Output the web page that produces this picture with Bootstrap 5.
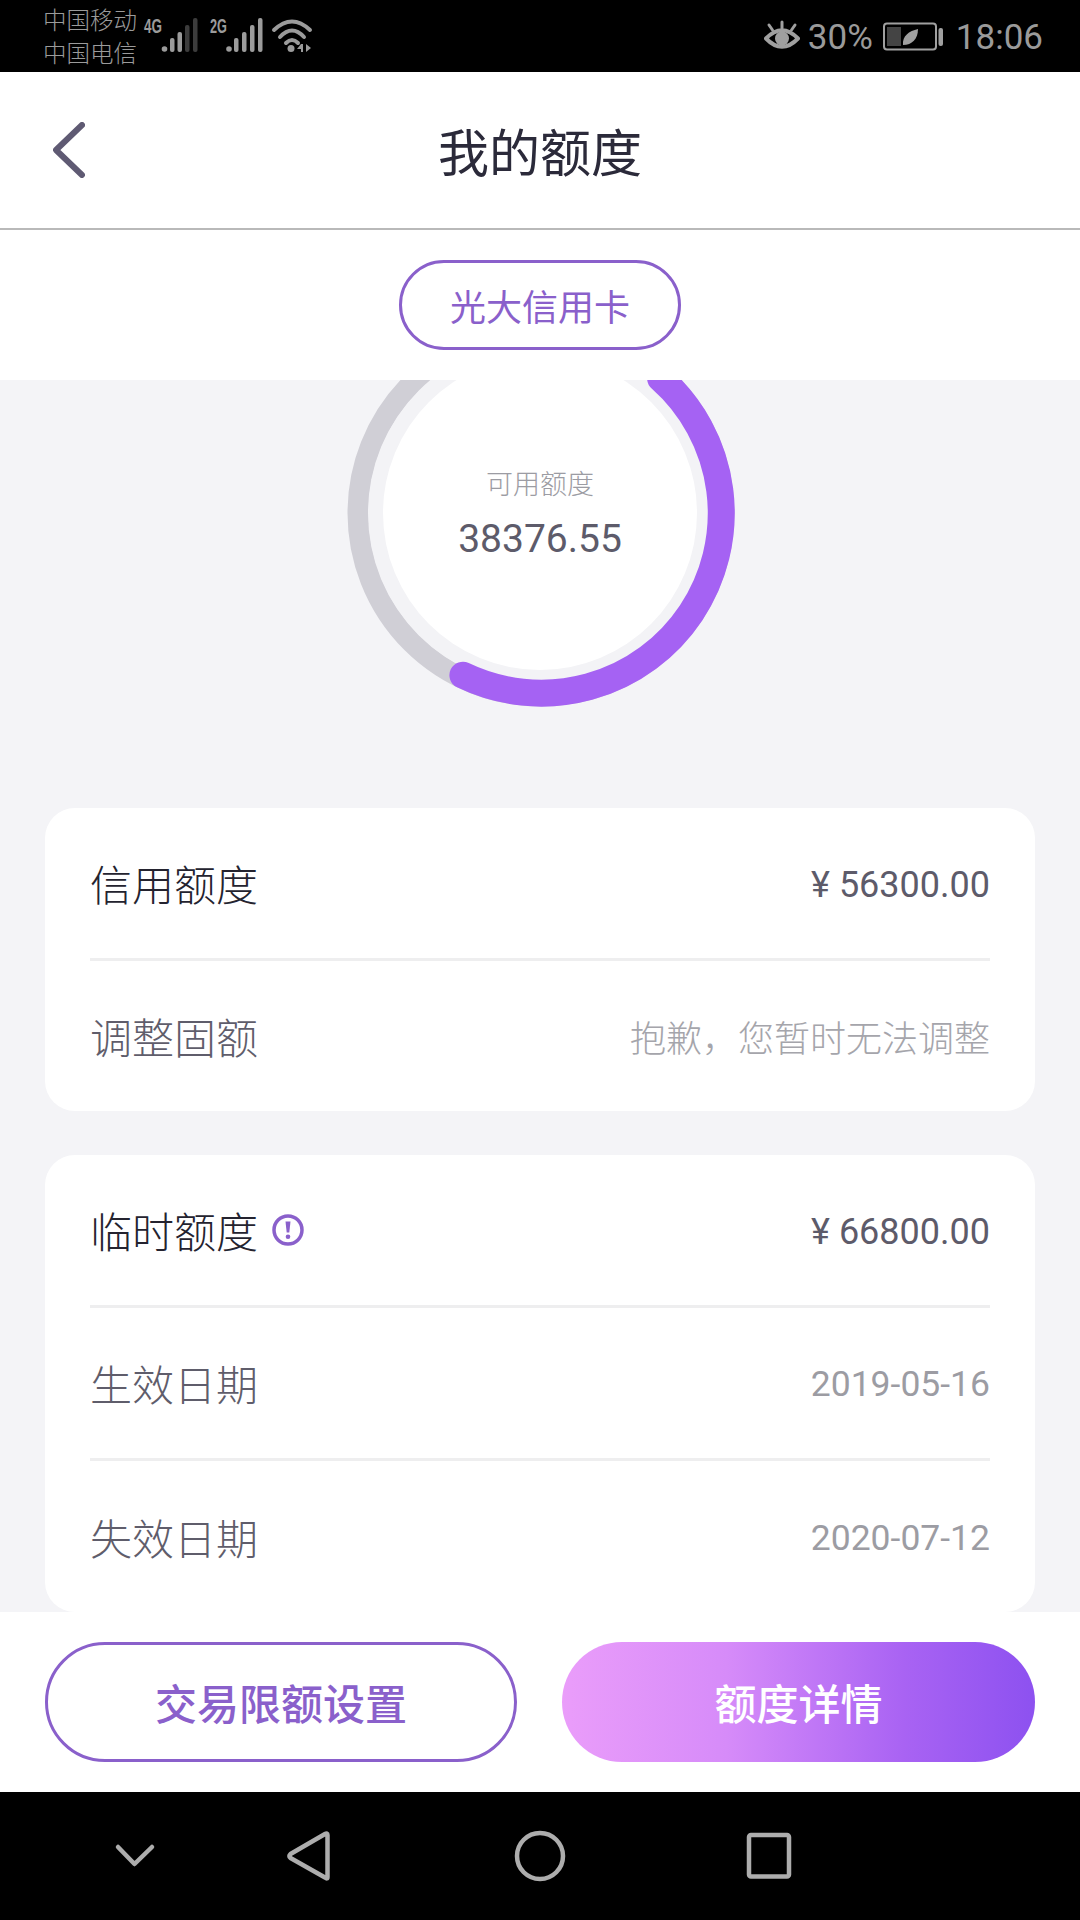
<!DOCTYPE html>
<html lang="zh">
<head>
<meta charset="utf-8">
<title>我的额度</title>
<link href="https://cdn.jsdelivr.net/npm/bootstrap@5.3.0/dist/css/bootstrap.min.css" rel="stylesheet">
<style>
html,body{margin:0;padding:0;background:#000}
.app-page{width:1080px;height:1920px;overflow:hidden;font-family:Roboto,"Noto Sans CJK SC",sans-serif;background:#fff}
.status-strip{height:72px;background:#000;color:#9b9b9b;flex:none}
.carrier{width:100px;margin-left:43px;font-size:23.500px;line-height:33px;font-family:"Noto Sans CJK SC",sans-serif;font-weight:300;padding-top:3px;white-space:nowrap}
.net-tag{font-family:"Liberation Sans",sans-serif;font-weight:700;font-size:20px;fill:#9b9b9b}
.sys-text{font-size:35px;font-weight:400;line-height:75px;color:#9a9a9a}
.sys-end{margin-right:37px;margin-left:12px}
.sys-pct{margin-left:8px}
.batt-icon{margin-left:10px}
.head-bar{height:158px;flex:none;border-bottom:2px solid #b9b9b9;background:#fff;padding-left:53px;position:relative}
.head-title{font-size:51px;color:#2b2a3a;font-family:"Noto Sans CJK SC",sans-serif;font-weight:400;line-height:1}
.title-slot{position:absolute;left:0;right:0;top:0;bottom:0}
.picker-band{height:150px;flex:none;background:#fff;padding-top:30px}
.pill-picker{width:282px;height:90px;border:3px solid #8a60cb;border-radius:45px;color:#8a60cb;font-size:36px;font-family:"Noto Sans CJK SC",sans-serif;padding:0;background:#fff}
.gray-area{height:1232px;flex:none;background:#f4f4f7;overflow:hidden}
.ring-stack{height:428px;display:grid}
.ring-stack>*{grid-area:1/1}
.ring-copy{height:268px}
.ring-label{font-size:27px;color:#9c9ca3;font-family:"Noto Sans CJK SC",sans-serif;font-weight:300;line-height:1;margin-top:89px}
.ring-value{font-size:39px;color:#5d5b6a;line-height:1;margin-top:24px}
.panel-box{margin:0 45px;border:0;border-radius:30px;background:#fff;padding:0 45px}
.panel-gap{margin-top:44px}
.line-row{height:153px;border-bottom:3px solid #eeeeef}
.line-row.final{border-bottom:0;height:151px}
.panel-short .line-row.final{height:150px}
.line-key{font-size:42px;font-family:"Noto Sans CJK SC",sans-serif;font-weight:300;color:#24232f;line-height:1}
.line-key.soft{color:#5f5d6b}
.line-num{font-size:36px;color:#5d5b6a;line-height:1;padding-top:3px}
.line-num.soft{font-size:35.500px;color:#9c9ca3;padding-top:4px}
.line-hint{font-size:36px;color:#a5a5ab;font-family:"Noto Sans CJK SC",sans-serif;font-weight:300;line-height:1}
.tip-icon{margin-left:14px}
.foot-band{height:180px;flex:none;background:#fff;padding:30px 45px 0}
.act-btn{height:120px;border-radius:60px;font-size:42px;font-family:"Noto Sans CJK SC",sans-serif;font-weight:500;padding:0;line-height:1}
.act-outline{width:472px;border:3px solid #8a60cb;color:#8a60cb;background:#fff}
.act-fill{width:473px;border:0;color:#fff;background:linear-gradient(90deg,#ea9dfa 0%,#d68bf9 35%,#a963f3 72%,#8d51f0 100%)}
.nav-strip{height:128px;flex:none;background:#000}
</style>
</head>
<body>
<div class="app-page d-flex flex-column">
  <div class="status-strip d-flex align-items-start">
    <div class="carrier"><div>中国移动</div><div>中国电信</div></div>
    <svg width="172" height="72" viewBox="143 0 172 72">
      <text x="144" y="33" class="net-tag" textLength="18" lengthAdjust="spacingAndGlyphs">4G</text>
      <g fill="#9b9b9b">
        <circle cx="164.500" cy="49" r="2.800"/>
        <rect x="170" y="38" width="4.500" height="14" rx="2"/>
        <rect x="177.500" y="32" width="4.500" height="20" rx="2"/>
        <rect x="185" y="25" width="4.500" height="27" rx="2" fill="#3c3c3c"/>
        <rect x="193" y="18" width="4.500" height="34" rx="2" fill="#3c3c3c"/>
      </g>
      <text x="210" y="33" class="net-tag" textLength="17" lengthAdjust="spacingAndGlyphs">2G</text>
      <g fill="#9b9b9b">
        <circle cx="229" cy="49" r="2.800"/>
        <rect x="234" y="38" width="4.500" height="14" rx="2"/>
        <rect x="242" y="32" width="4.500" height="20" rx="2"/>
        <rect x="250" y="25" width="4.500" height="27" rx="2"/>
        <rect x="258" y="18" width="4.500" height="34" rx="2"/>
      </g>
      <g fill="none" stroke="#9b9b9b" stroke-width="4" stroke-linecap="round">
        <path d="M274 30Q292 13 310 30"/>
        <path d="M280 37Q292 24 304 37"/>
        <path d="M286 43Q292 37 298 43"/>
      </g>
      <circle cx="291" cy="48.500" r="3.500" fill="#9b9b9b"/>
      <path d="M301 44h2v8h-2zM297 49l4-5v5zM306 44l5 4-5 4z" fill="#9b9b9b"/>
    </svg>
    <div class="ms-auto d-flex align-items-start">
      <svg width="36" height="72" viewBox="766 0 36 72">
        <path d="M768 38.500Q784 22 800 38.500Q784 55 768 38.500Z" fill="none" stroke="#a0a0a0" stroke-width="4" stroke-linejoin="round"/>
        <circle cx="784" cy="38.500" r="7" fill="#a0a0a0"/>
        <path d="M784 22v6M771 25l3.500 5M797 25l-3.500 5" stroke="#a0a0a0" stroke-width="3" stroke-linecap="round"/>
      </svg>
      <span class="sys-text sys-pct">30%</span>
      <svg width="61" height="72" viewBox="884 0 61 72" class="batt-icon">
        <rect x="885" y="23.500" width="52" height="26" rx="3" fill="none" stroke="#a0a0a0" stroke-width="2"/>
        <rect x="888" y="27" width="14" height="19" fill="#444"/>
        <path d="M904 45c-1-9 6-14 15-16c0 10-6 16-15 16z" fill="#a0a0a0"/>
        <rect x="939.500" y="28" width="4.500" height="18" rx="2" fill="#a0a0a0"/>
      </svg>
      <span class="sys-text sys-end">18:06</span>
    </div>
  </div>

  <div class="head-bar d-flex align-items-center">
    <svg width="32" height="56" viewBox="0 0 32 56">
      <path d="M29 3L3 28L29 53" fill="none" stroke="#5f5a73" stroke-width="6" stroke-linecap="round" stroke-linejoin="round"/>
    </svg>
    <div class="title-slot d-flex align-items-center justify-content-center"><span class="head-title">我的额度</span></div>
  </div>

  <div class="picker-band d-flex justify-content-center align-items-start">
    <button type="button" class="btn pill-picker">光大信用卡</button>
  </div>

  <div class="gray-area">
    <div class="ring-stack">
      <svg width="1080" height="428" viewBox="0 380 1080 428">
        <circle cx="541" cy="513" r="183" fill="none" stroke="#d0cfd6" stroke-width="21"/>
        <circle cx="541" cy="513" r="173" fill="#f3f3f6"/>
        <circle cx="540" cy="513" r="157" fill="#fff"/>
        <path d="M462.900 675.200A180 180 0 0 0 660.600 378.400" fill="none" stroke="#a562f3" stroke-width="27" stroke-linecap="round"/>
      </svg>
      <div class="ring-copy d-flex flex-column align-items-center text-center">
        <div class="ring-label">可用额度</div>
        <div class="ring-value">38376.55</div>
      </div>
    </div>

    <div class="card panel-box panel-short">
      <div class="line-row d-flex justify-content-between align-items-center">
        <span class="line-key">信用额度</span><span class="line-num">¥ 56300.00</span>
      </div>
      <div class="line-row final d-flex justify-content-between align-items-center">
        <span class="line-key soft">调整固额</span><span class="line-hint">抱歉，您暂时无法调整</span>
      </div>
    </div>

    <div class="card panel-box panel-gap">
      <div class="line-row d-flex justify-content-between align-items-center">
        <span class="d-flex align-items-center">
          <span class="line-key">临时额度</span>
          <svg width="32" height="32" viewBox="0 0 32 32" class="tip-icon">
            <circle cx="16" cy="16" r="14" fill="none" stroke="#8a60cb" stroke-width="3.500"/>
            <path d="M13.500 7.500h5l-1.200 11h-2.600z" fill="#8a60cb"/><circle cx="16" cy="22.800" r="2.300" fill="#8a60cb"/>
          </svg>
        </span>
        <span class="line-num">¥ 66800.00</span>
      </div>
      <div class="line-row d-flex justify-content-between align-items-center">
        <span class="line-key soft">生效日期</span><span class="line-num soft">2019-05-16</span>
      </div>
      <div class="line-row final d-flex justify-content-between align-items-center">
        <span class="line-key soft">失效日期</span><span class="line-num soft">2020-07-12</span>
      </div>
    </div>
  </div>

  <div class="foot-band d-flex justify-content-between align-items-start">
    <button type="button" class="btn act-btn act-outline">交易限额设置</button>
    <button type="button" class="btn act-btn act-fill">额度详情</button>
  </div>

  <div class="nav-strip">
    <svg width="1080" height="128" viewBox="0 1792 1080 128" class="d-block">
      <g fill="none" stroke="#adadad" stroke-width="4.500" stroke-linejoin="round" stroke-linecap="round">
        <path d="M118 1847L134.500 1864L152 1847"/>
        <path d="M327.500 1835V1877Q327.500 1879.500 325 1877.500L290.500 1858Q288.500 1856 290.500 1854L325 1834Q327.500 1832.500 327.500 1835Z"/>
        <circle cx="540" cy="1856" r="23"/>
        <rect x="749" y="1835" width="40" height="41.500" rx="2"/>
      </g>
    </svg>
  </div>
</div>
<script src="https://cdn.jsdelivr.net/npm/bootstrap@5.3.0/dist/js/bootstrap.bundle.min.js"></script>
</body>
</html>
